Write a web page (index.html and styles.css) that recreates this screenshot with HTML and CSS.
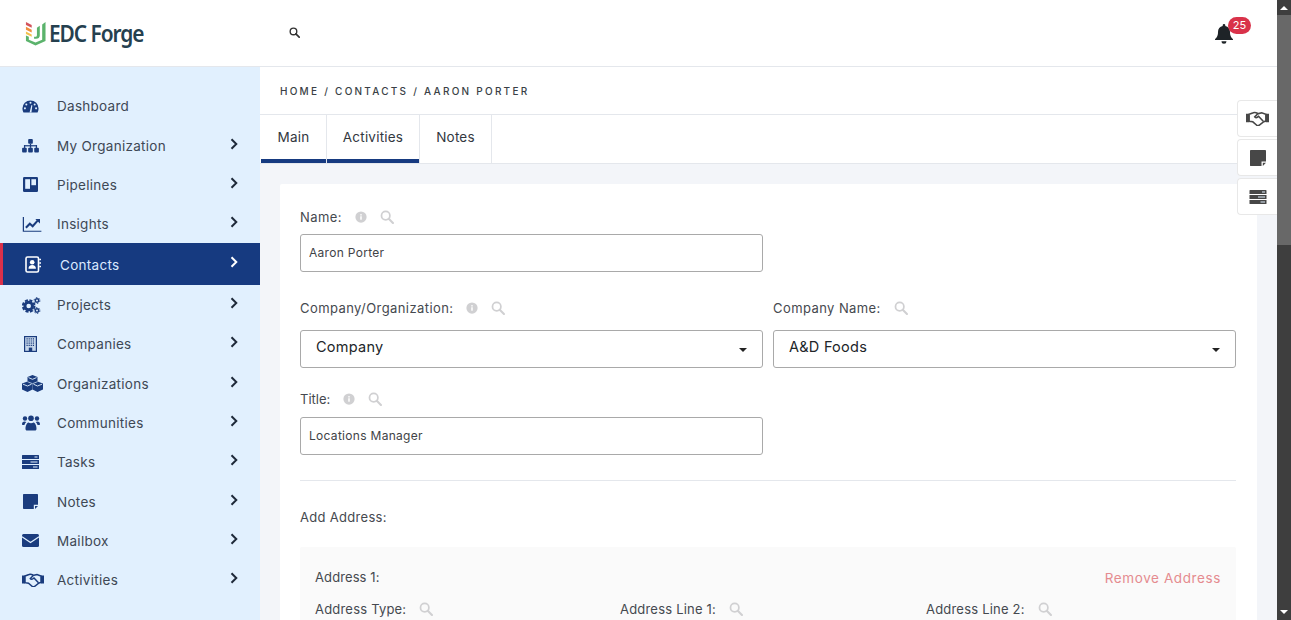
FILE: index.html
```html
<!DOCTYPE html>
<html lang="en">
<head>
<meta charset="utf-8">
<title>EDC Forge</title>
<link rel="stylesheet" href="styles.css">
</head>
<body>
<svg class="defs" width="0" height="0">
  <symbol id="i-search" viewBox="0 0 16 16"><circle cx="6.500" cy="6.500" r="4.800" fill="none" stroke="currentColor" stroke-width="2"/><path d="M10 10l4.800 4.800" stroke="currentColor" stroke-width="2.400" stroke-linecap="round"/></symbol>
  <symbol id="i-info" viewBox="0 0 16 16"><circle cx="8" cy="8" r="7.500" fill="currentColor"/><rect x="7" y="7" width="2" height="4.600" fill="#fff"/><rect x="7" y="4.200" width="2" height="1.800" fill="#fff"/></symbol>
  <symbol id="i-chev" viewBox="0 0 8 12"><path d="M1.500 1.200L6.300 6l-4.800 4.800" fill="none" stroke="currentColor" stroke-width="2"/></symbol>
  <symbol id="i-dash" viewBox="0 0 18 14"><path d="M9 0.500A8.700 8.700 0 0 0 0.300 9.200c0 1.600.4 3 1.100 4.300h15.200c.7-1.300 1.100-2.700 1.100-4.300A8.700 8.700 0 0 0 9 .5z" fill="currentColor"/><g fill="#e1f0fe"><circle cx="9" cy="3" r="1.100"/><circle cx="4.500" cy="4.800" r="1.100"/><circle cx="13.500" cy="4.800" r="1.100"/><circle cx="3" cy="9" r="1.100"/><circle cx="15" cy="9" r="1.100"/><path d="M8 13.500L10 5.500l1 .3-1 7.700z"/></g></symbol>
  <symbol id="i-site" viewBox="0 0 18 15"><g fill="currentColor"><rect x="6.500" y="0" width="5" height="5" rx="1"/><rect x="0" y="9.500" width="5" height="5" rx="1"/><rect x="6.500" y="9.500" width="5" height="5" rx="1"/><rect x="13" y="9.500" width="5" height="5" rx="1"/><rect x="8.300" y="5" width="1.400" height="4.500"/><rect x="2" y="6.600" width="14" height="1.300"/><rect x="2" y="6.600" width="1.300" height="3"/><rect x="14.700" y="6.600" width="1.300" height="3"/></g></symbol>
  <symbol id="i-trello" viewBox="0 0 15 15"><rect width="15" height="15" rx="1.200" fill="currentColor"/><rect x="2.200" y="2.200" width="4.800" height="9.600" fill="#e1f0fe"/><rect x="8.400" y="2.200" width="4.600" height="6" fill="#e1f0fe"/></symbol>
  <symbol id="i-chart" viewBox="0 0 20 16"><path d="M.8 0v15.200H20" fill="none" stroke="currentColor" stroke-width="1.300"/><path d="M3.500 11.500l4.200-4.300 3 2.600 5.300-6" fill="none" stroke="currentColor" stroke-width="2.200"/><path d="M13.500 2h5v5z" fill="currentColor"/></symbol>
  <symbol id="i-book" viewBox="0 0 16 17"><rect x="1" y="1" width="12.500" height="15" rx="1.500" fill="none" stroke="currentColor" stroke-width="1.600"/><circle cx="7.200" cy="6.300" r="2.300" fill="currentColor"/><path d="M3.500 12.800c0-2.600 1.500-3.800 3.700-3.800s3.700 1.200 3.700 3.800z" fill="currentColor"/><path d="M14.200 3.500H16M14.200 7H16M14.200 10.500H16" stroke="currentColor" stroke-width="1.300"/></symbol>
  <symbol id="i-cogs" viewBox="0 0 19 17"><circle cx="6.700" cy="9" r="3.800" fill="none" stroke="currentColor" stroke-width="3"/><circle cx="6.700" cy="9" r="5.800" fill="none" stroke="currentColor" stroke-width="2" stroke-dasharray="3 1.560"/><g fill="none" stroke="currentColor"><circle cx="15" cy="3.500" r="1.700" stroke-width="1.500"/><circle cx="15" cy="3.500" r="2.900" stroke-width="1" stroke-dasharray="1.500 1.540"/><circle cx="15" cy="13.500" r="1.700" stroke-width="1.500"/><circle cx="15" cy="13.500" r="2.900" stroke-width="1" stroke-dasharray="1.500 1.540"/></g></symbol>
  <symbol id="i-build" viewBox="0 0 13 16"><rect x=".6" y=".6" width="11.800" height="14.800" fill="#c5d6ea" stroke="currentColor" stroke-width="1.200"/><path d="M2.500 2.800h8M2.500 5h8M2.500 7.200h8M2.500 9.400h8" stroke="currentColor" stroke-width="1.200" stroke-dasharray="1.200 .9"/><rect x="4.800" y="11.600" width="3.400" height="3.800" fill="currentColor"/></symbol>
  <symbol id="i-cubes" viewBox="0 0 21 17"><g fill="currentColor"><path d="M10.500 0l5 2v5.200l-5 2.200-5-2.200V2z"/><path d="M5.500 6.500l5 2v6l-5 2.500L0 14.500v-6z"/><path d="M15.500 6.500L21 8.500v6L15.500 17l-5-2.500v-6z"/></g><g fill="none" stroke="#e1f0fe" stroke-width=".9"><path d="M6.500 2.600l4 1.700 4-1.700M1 9.200l4.500 1.800 4-1.800M11.500 9.200l4 1.800 4.500-1.800"/><path d="M5.500 6.700l5 2 5-2" stroke-width=".7"/></g></symbol>
  <symbol id="i-users" viewBox="0 0 18 15"><g fill="currentColor"><circle cx="3" cy="3" r="2.200"/><circle cx="15" cy="3" r="2.200"/><circle cx="9" cy="2.800" r="2.800"/><path d="M0 9c0-2.200 1-3 2.500-3 .7 0 1.300.2 1.800.6C3.200 7.500 2.700 8.500 2.500 9.500H.7C.3 9.500 0 9.300 0 9zM18 9c0-2.200-1-3-2.500-3-.7 0-1.300.2-1.800.6 1.100.9 1.600 1.900 1.800 2.900h1.800c.4 0 .7-.2.700-.5z"/><path d="M3.500 13.500c0-4 1.800-6.500 3-6.500.7.500 1.600.8 2.500.8s1.800-.3 2.500-.8c1.200 0 3 2.500 3 6.500 0 .8-.6 1.500-1.500 1.500H5c-.9 0-1.500-.7-1.500-1.500z"/></g></symbol>
  <symbol id="i-tasks" viewBox="0 0 17 14"><path d="M.6 0H16.400a.6.6 0 0 1 .6.600V4H0V.6A.6.6 0 0 1 .6 0zM0 5h17v4H0zM0 10h17v3.400a.6.6 0 0 1-.6.600H.6a.6.6 0 0 1-.6-.600z" fill="currentColor"/><path d="M12.500 2h3M8.500 7h7M11 12h4.500" stroke="#e1f0fe" stroke-width="1"/></symbol>
  <symbol id="i-note" viewBox="0 0 15 15"><path d="M.8 0h13.400a.8.800 0 0 1 .8.800V10.800h-4.200V15H.8a.8.800 0 0 1-.8-.800V.800A.8.800 0 0 1 .8 0z" fill="currentColor"/><path d="M12 12h3l-3 3z" fill="currentColor"/></symbol>
  <symbol id="i-mail" viewBox="0 0 17 13"><rect width="17" height="13" rx="1.500" fill="currentColor"/><path d="M0 2.800l8.500 5.700L17 2.800" fill="none" stroke="#e1f0fe" stroke-width="1.200"/></symbol>
  <symbol id="i-hand" viewBox="0 0 22 14"><path d="M0 2.500h3v8H0zM19 2.500h3v8h-3z" fill="currentColor"/><path d="M3 3l4-1.500c1.500-.7 2.500-.3 4 .5l1 .3 3-.8 4 1.500v6.500l-2 .5-4.500 3.500c-1 .6-2 .3-2.500-.3l-3.500-3-3.500-.5z" fill="none" stroke="currentColor" stroke-width="1.500"/><path d="M11.500 2.200L8.300 5.500c.6 1 1.800 1 2.700.2l1-.8 4.500 4.800" fill="none" stroke="currentColor" stroke-width="1.500"/></symbol>
  <symbol id="i-bell" viewBox="0 0 18 20"><path d="M9 0c-.8 0-1.300.6-1.300 1.300v.8C4.700 2.700 3 5 3 8c0 4-1.300 5.500-3 7.200V16h18v-.8C16.300 13.500 15 12 15 8c0-3-1.700-5.300-4.700-5.900v-.8C10.300.6 9.800 0 9 0z" fill="currentColor"/><path d="M6.500 17.300h5a2.500 2.500 0 0 1-5 0z" fill="currentColor"/></symbol>
</svg>

<div class="app">
  <header class="topbar">
    <a class="logo">
      <svg class="logo-mark" viewBox="0 0 22 26">
        <path d="M1 1.500l6 3v3l-6-3z" fill="#d3545c"/>
        <path d="M1 6.500l6 3v3l-6-3z" fill="#ef8f3c"/>
        <path d="M1 11.500l6 3v2.500l-6-3z" fill="#f2c14e"/>
        <path d="M1 15.500l3 1.500v3l7 3 7-3V4l3.500-2.500V21.500L11 26 1 21.500z" fill="#5bb36c"/>
        <path d="M15.500 5.500v10c0 2-1.500 3.500-4 3.500H9.500v-2h1c1.500 0 2-.6 2-2V7.500z" fill="#5bb36c"/>
      </svg>
      <span class="logo-text">EDC Forge</span>
    </a>
    <svg class="top-search"><use href="#i-search"/></svg>
    <div class="bell">
      <svg class="bell-icon"><use href="#i-bell"/></svg>
      <span class="badge">25</span>
    </div>
  </header>

  <div class="body">
    <nav class="sidebar">
      <a class="nav-item"><svg class="nav-icon ic-dash"><use href="#i-dash"/></svg><span class="nav-label">Dashboard</span></a>
      <a class="nav-item"><svg class="nav-icon ic-site"><use href="#i-site"/></svg><span class="nav-label">My Organization</span><svg class="chev"><use href="#i-chev"/></svg></a>
      <a class="nav-item"><svg class="nav-icon ic-trello"><use href="#i-trello"/></svg><span class="nav-label">Pipelines</span><svg class="chev"><use href="#i-chev"/></svg></a>
      <a class="nav-item"><svg class="nav-icon ic-chart"><use href="#i-chart"/></svg><span class="nav-label">Insights</span><svg class="chev"><use href="#i-chev"/></svg></a>
      <a class="nav-item active"><svg class="nav-icon ic-book"><use href="#i-book"/></svg><span class="nav-label">Contacts</span><svg class="chev"><use href="#i-chev"/></svg></a>
      <a class="nav-item"><svg class="nav-icon ic-cogs"><use href="#i-cogs"/></svg><span class="nav-label">Projects</span><svg class="chev"><use href="#i-chev"/></svg></a>
      <a class="nav-item"><svg class="nav-icon ic-build"><use href="#i-build"/></svg><span class="nav-label">Companies</span><svg class="chev"><use href="#i-chev"/></svg></a>
      <a class="nav-item"><svg class="nav-icon ic-cubes"><use href="#i-cubes"/></svg><span class="nav-label">Organizations</span><svg class="chev"><use href="#i-chev"/></svg></a>
      <a class="nav-item"><svg class="nav-icon ic-users"><use href="#i-users"/></svg><span class="nav-label">Communities</span><svg class="chev"><use href="#i-chev"/></svg></a>
      <a class="nav-item"><svg class="nav-icon ic-tasks"><use href="#i-tasks"/></svg><span class="nav-label">Tasks</span><svg class="chev"><use href="#i-chev"/></svg></a>
      <a class="nav-item"><svg class="nav-icon ic-note"><use href="#i-note"/></svg><span class="nav-label">Notes</span><svg class="chev"><use href="#i-chev"/></svg></a>
      <a class="nav-item"><svg class="nav-icon ic-mail"><use href="#i-mail"/></svg><span class="nav-label">Mailbox</span><svg class="chev"><use href="#i-chev"/></svg></a>
      <a class="nav-item"><svg class="nav-icon ic-hand"><use href="#i-hand"/></svg><span class="nav-label">Activities</span><svg class="chev"><use href="#i-chev"/></svg></a>
    </nav>

    <main class="main">
      <div class="crumbs">HOME / CONTACTS / AARON PORTER</div>
      <div class="tabs">
        <a class="tab tab-main on">Main</a>
        <a class="tab tab-act on">Activities</a>
        <a class="tab tab-notes">Notes</a>
      </div>
      <section class="content">
        <form class="card">
          <div class="row">
            <div class="field">
              <div class="label"><span>Name:</span><svg class="info"><use href="#i-info"/></svg><svg class="find"><use href="#i-search"/></svg></div>
              <input class="input" value="Aaron Porter">
            </div>
          </div>
          <div class="row row-select">
            <div class="field">
              <div class="label label-select"><span>Company/Organization:</span><svg class="info"><use href="#i-info"/></svg><svg class="find"><use href="#i-search"/></svg></div>
              <div class="select">Company<i class="caret"></i></div>
            </div>
            <div class="field">
              <div class="label label-select"><span>Company Name:</span><svg class="find"><use href="#i-search"/></svg></div>
              <div class="select">A&amp;D Foods<i class="caret"></i></div>
            </div>
          </div>
          <div class="row row-last">
            <div class="field">
              <div class="label label-title"><span>Title:</span><svg class="info"><use href="#i-info"/></svg><svg class="find"><use href="#i-search"/></svg></div>
              <input class="input" value="Locations Manager">
            </div>
          </div>
          <hr class="divider">
          <div class="add-address">Add Address:</div>
          <div class="address">
            <div class="address-head"><span>Address 1:</span><a class="remove">Remove Address</a></div>
            <div class="address-cols">
              <div class="label"><span>Address Type:</span><svg class="find"><use href="#i-search"/></svg></div>
              <div class="label"><span>Address Line 1:</span><svg class="find"><use href="#i-search"/></svg></div>
              <div class="label"><span>Address Line 2:</span><svg class="find"><use href="#i-search"/></svg></div>
            </div>
          </div>
        </form>
      </section>
    </main>
  </div>

  <aside class="rail">
    <a class="rail-btn"><svg class="rail-hand"><use href="#i-hand"/></svg></a>
    <a class="rail-btn"><svg class="rail-note"><use href="#i-note"/></svg></a>
    <a class="rail-btn"><svg class="rail-tasks"><use href="#i-tasks"/></svg></a>
  </aside>

  <div class="scrollbar">
    <i class="sb-up"></i>
    <div class="sb-thumb"></div>
    <i class="sb-down"></i>
  </div>
</div>
</body>
</html>
```
FILE: styles.css
```css
* { box-sizing: border-box; }
html, body { margin: 0; height: 100%; overflow: hidden; }
body {
  font-family: "Inter", "Open Sans", "Liberation Sans", sans-serif;
  color: #3f4650;
  background: #fff;
}
.defs { position: absolute; }
.app { position: relative; height: 620px; width: 1291px; overflow: hidden; padding-right: 14px; }

/* top bar */
.topbar {
  height: 67px;
  display: flex;
  align-items: center;
  border-bottom: 1px solid #e4e7ec;
  background: #fff;
  padding-left: 25px;
}
.logo { display: flex; align-items: center; width: 264px; gap: 3px; }
.logo-mark { width: 21px; height: 26px; flex: none; }
.logo-text {
  font-family: "Noto Sans", sans-serif;
  font-size: 24px;
  font-weight: 600;
  letter-spacing: -1.2px;
  color: #25404f;
  line-height: 26px;
  transform: scaleX(.87);
  transform-origin: left center;
}
.top-search { width: 11px; height: 11px; color: #333; margin-top: -2px; }
.bell { margin-left: auto; margin-right: 26px; display: flex; position: relative; width: 36px; height: 26px; margin-top: -2px; }
.bell-icon { width: 18px; height: 20px; color: #1e2327; margin-top: 5px; }
.badge {
  position: absolute;
  left: 13px;
  top: -2px;
  width: 23px;
  height: 17px;
  border-radius: 9px;
  background: #d9324a;
  color: #fff;
  font-size: 11px;
  line-height: 17px;
  text-align: center;
}

/* sidebar */
.body { display: flex; height: 553px; }
.sidebar {
  width: 260px;
  flex: none;
  background: #e1f0fe;
  padding-top: 19.7px;
}
.nav-item {
  height: 39.3px;
  display: flex;
  align-items: center;
  width: 260px;
  padding-left: 22px;
  padding-right: 22px;
  color: #3e4855;
  position: relative;
}
.nav-icon { color: #1a3c7e; flex: none; width: 18px; height: 16px; margin-right: 17px; }
.nav-label { font-size: 13.5px; letter-spacing: .28px; flex: 1; }
.chev { width: 8px; height: 12px; color: #1f2a3a; margin-top: -4px; flex: none; }
.nav-item.active {
  height: 42px;
  margin: -.6px 0 .15px;
  background: #163a80;
  border-left: 3px solid #d9304a;
  color: #dbe9ff;
  padding-left: 22px;
}
.nav-item.active .nav-label { padding-top: 2px; }
.nav-item.active .chev { color: #fff; }
.nav-item.active .nav-icon { color: #fff; }
.ic-dash { width: 17px; height: 13px; margin-right: 18px; }
.ic-site { width: 17px; height: 14px; margin-right: 18px; }
.ic-trello { width: 15px; height: 15px; margin-left: 1px; margin-right: 19px; }
.ic-chart { width: 20px; height: 15px; margin-right: 15px; }
.ic-book { width: 16px; height: 17px; margin-left: 0; margin-right: 19px; }
.ic-cogs { width: 19px; height: 17px; margin-right: 16px; }
.ic-build { width: 13px; height: 16px; margin-left: 2px; margin-right: 20px; }
.ic-cubes { width: 21px; height: 17px; margin-right: 14px; }
.ic-users { width: 18px; height: 16px; }
.ic-tasks { width: 17px; height: 14px; margin-right: 18px; }
.ic-note { width: 15px; height: 15px; margin-left: 1px; margin-right: 19px; }
.ic-mail { width: 17px; height: 13px; margin-right: 18px; }
.ic-hand { width: 22px; height: 14px; margin-right: 13px; }

/* main */
.main { flex: 1; min-width: 0; display: flex; flex-direction: column; position: relative; background: #fff; }
.crumbs {
  height: 48px;
  flex: none;
  padding: 17px 0 0 20px;
  font-size: 10px;
  line-height: 14px;
  font-weight: 500;
  letter-spacing: 2.25px;
  color: #3a3f46;
  border-bottom: 1px solid #e4e7ec;
}
.tabs { display: flex; height: 49px; border-bottom: 1px solid #e4e7ec; padding-left: 1px; flex: none; }
.tab {
  height: 48px;
  display: flex;
  align-items: center;
  justify-content: center;
  font-size: 13.5px;
  letter-spacing: .2px;
  color: #33383f;
  padding-bottom: 5px;
  position: relative;
  border-right: 1px solid #e4e7ec;
}
.tab-main { width: 66px; }
.tab-act { width: 93px; }
.tab-notes { width: 72px; }
.tab.on::after {
  content: "";
  position: absolute;
  left: 0;
  right: 0;
  bottom: 0;
  height: 4px;
  background: #163a80;
}
.content { flex: 1; min-height: 0; overflow: hidden; background: #f3f5f9; padding: 20px 20px 0; }
.card { background: #fff; padding: 23px 21px 0 20px; height: 600px; border-radius: 2px; }

.row { display: grid; grid-template-columns: 1fr 1fr; gap: 10px; margin-bottom: 26px; }
.row-select { margin-bottom: 21px; }
.row-last { margin-bottom: 25px; }
.label {
  display: flex;
  align-items: center;
  height: 20px;
  font-size: 13px;
  letter-spacing: .42px;
  color: #45494f;
  margin-bottom: 7px;
}
.label-select { margin-bottom: 12px; }
.label-title { margin-bottom: 8px; letter-spacing: 0; }
.info { width: 12px; height: 12px; color: #d0d0d2; margin-left: 13px; flex: none; }
.find { width: 14px; height: 14px; color: #d0d0d2; margin-left: 13px; flex: none; }
.input {
  display: block;
  width: 100%;
  height: 38px;
  border: 1px solid #a9a9a9;
  border-radius: 3px;
  padding: 0 8px 1px;
  font-family: inherit;
  font-size: 12px;
  letter-spacing: .3px;
  color: #3f4347;
  background: #fff;
  outline: none;
}
.select {
  height: 38px;
  border: 1px solid #a9a9a9;
  border-radius: 3px;
  padding: 0 15px 5px;
  display: flex;
  align-items: center;
  justify-content: space-between;
  font-size: 14.5px;
  font-weight: 400;
  letter-spacing: .25px;
  color: #212529;
}
.caret {
  width: 0;
  height: 0;
  border-left: 4.5px solid transparent;
  border-right: 4.5px solid transparent;
  border-top: 4.5px solid #222;
  margin-top: 6px;
}
.divider { border: 0; border-top: 1px solid #e4e7ec; margin: 0 0 26px; }
.add-address { font-size: 13px; letter-spacing: .3px; line-height: 20px; color: #45494f; margin-bottom: 20px; }
.address { background: #fafafa; padding: 20px 15px 0; height: 200px; border-radius: 2px; }
.address-head {
  display: flex;
  justify-content: space-between;
  font-size: 13px;
  letter-spacing: .1px;
  line-height: 20px;
  margin-bottom: 11px;
  color: #45494f;
}
.remove { color: #e58b8f; font-size: 13.5px; letter-spacing: .6px; padding-top: 1px; }
.address-cols { display: grid; grid-template-columns: 305px 306px 1fr; }
.address-cols .label { letter-spacing: .2px; }

/* floating rail */
.rail {
  position: absolute;
  top: 100px;
  left: 1237px;
  width: 40px;
  display: flex;
  flex-direction: column;
  gap: 2px;
}
.rail-btn {
  height: 37px;
  background: #fff;
  border: 1px solid #e8e8e8;
  border-right: 0;
  border-radius: 4px 0 0 4px;
  display: flex;
  align-items: center;
  justify-content: center;
  color: #474747;
}
.rail-hand { width: 23px; height: 15px; }
.rail-note { width: 16px; height: 16px; }
.rail-tasks { width: 18px; height: 14px; }

/* scrollbar */
.scrollbar {
  position: absolute;
  right: 0;
  top: 0;
  bottom: 0;
  width: 14px;
  background: #3e3e3e;
}
.sb-up, .sb-down {
  position: absolute;
  left: 3px;
  width: 0;
  height: 0;
  border-left: 4px solid transparent;
  border-right: 4px solid transparent;
}
.sb-up { top: 6px; border-bottom: 4px solid #fff; }
.sb-down { bottom: 6px; border-top: 4px solid #fff; }
.sb-thumb { position: absolute; top: 15px; left: 0; right: 0; height: 230px; background: #686868; }
```
